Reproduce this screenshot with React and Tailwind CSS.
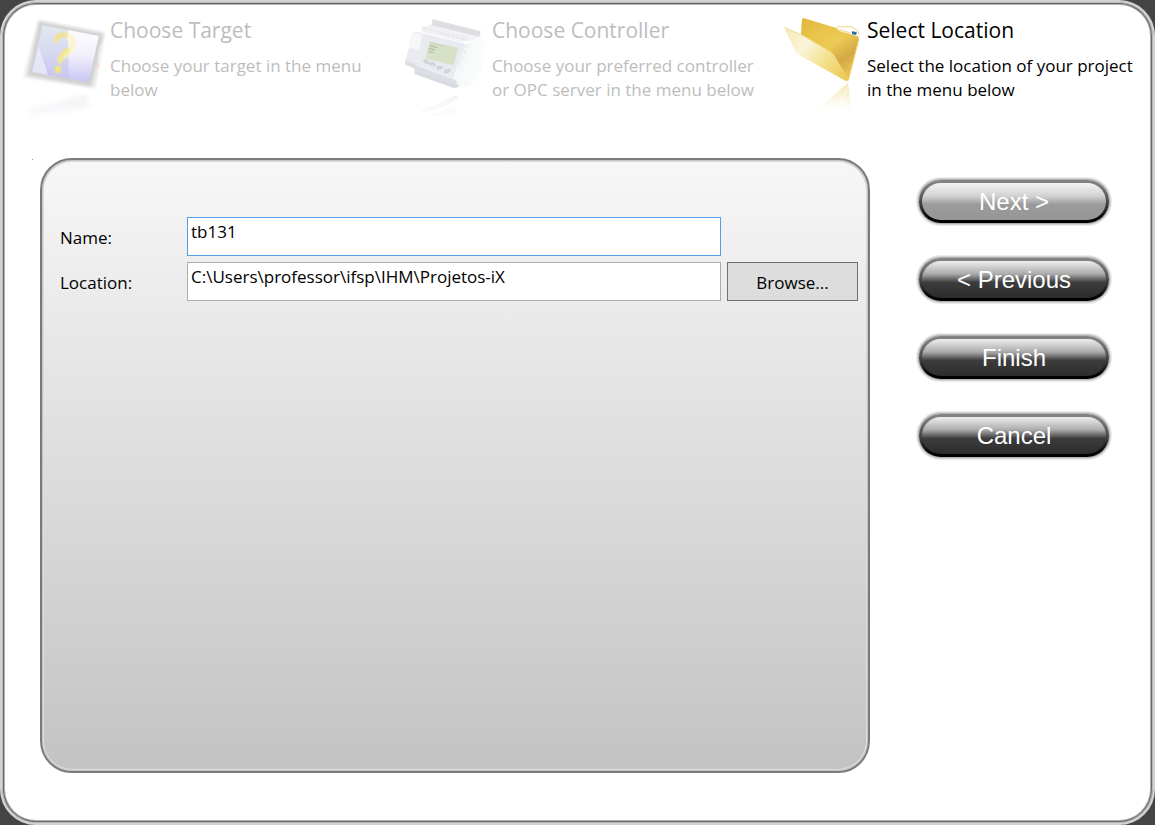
import React from "react";

const FONT = "font-['Open_Sans','Noto_Sans',sans-serif]";

function TargetIcon() {
  return (
    <svg viewBox="6 -12 264 336" className="h-[112px] w-[88px]" aria-hidden="true">
      <defs>
        <linearGradient id="screen" x1="0.3" y1="0" x2="0.2" y2="1">
          <stop offset="0" stopColor="#e3e9f0" />
          <stop offset="0.5" stopColor="#d6d8f1" />
          <stop offset="1" stopColor="#c3c2f0" />
        </linearGradient>
        <linearGradient id="screenRight" x1="0.3" y1="0" x2="0.3" y2="1">
          <stop offset="0" stopColor="#fcfcff" />
          <stop offset="0.45" stopColor="#f3f2fc" />
          <stop offset="1" stopColor="#cac6f5" />
        </linearGradient>
        <linearGradient id="targetFade" x1="0" y1="0" x2="0" y2="1">
          <stop offset="0" stopColor="#f3f3f6" />
          <stop offset="1" stopColor="#fafafc" />
        </linearGradient>
        <filter id="soft" x="-20%" y="-20%" width="140%" height="140%">
          <feGaussianBlur stdDeviation="2.5" />
        </filter>
        <filter id="softer" x="-20%" y="-20%" width="140%" height="140%">
          <feGaussianBlur stdDeviation="6" />
        </filter>
      </defs>
      <path d="M58 34 250 70 222 230 16 198Z" fill="#ebebeb" stroke="#ebebeb" strokeWidth="10" strokeLinejoin="round" filter="url(#soft)" />
      <path d="M60 38 246 74 212 226 26 194Z" fill="#d2d2d2" stroke="#d2d2d2" strokeWidth="6" strokeLinejoin="round" filter="url(#soft)" />
      <path d="M68 46 236 78 206 216 34 186Z" fill="url(#screen)" />
      <path d="M144 60 236 78 206 216 146 206Z" fill="url(#screenRight)" />
      <path d="M56 110 84 194 36 186Z" fill="#eeeefa" opacity="0.75" />
      <g fill="none" filter="url(#soft)" strokeLinecap="round">
        <path d="M140 76C154 82 164 94 158 110C154 122 140 128 134 138" stroke="#fbf5cc" strokeWidth="15" />
        <path d="M108 90C114 76 124 72 136 75" stroke="#f1e195" strokeWidth="15" />
        <path d="M142 122C130 130 122 140 120 153" stroke="#f5e88e" strokeWidth="15" />
      </g>
      <path d="M108 169 122 170 119 188 106 186Z" fill="#f5e57c" stroke="#f5e57c" strokeWidth="4" filter="url(#soft)" />
      <path d="M236 150 244 108" stroke="#f6f6f6" strokeWidth="5" filter="url(#soft)" />
      <circle cx="233" cy="166" r="5" fill="#f4cccc" filter="url(#soft)" />
      <path d="M26 298 196 252 214 284 170 302 34 318Z" fill="url(#targetFade)" filter="url(#softer)" />
    </svg>
  );
}

function ControllerIcon() {
  return (
    <svg viewBox="12 -12 264 336" className="h-[112px] w-[88px]" aria-hidden="true">
      <defs>
        <linearGradient id="side" x1="0" y1="0" x2="1" y2="0.3">
          <stop offset="0" stopColor="#f4f7f7" />
          <stop offset="1" stopColor="#fbfdfd" />
        </linearGradient>
        <linearGradient id="controllerFade" x1="0" y1="0" x2="0" y2="1">
          <stop offset="0" stopColor="#f3f3f5" />
          <stop offset="1" stopColor="#ffffff" />
        </linearGradient>
        <filter id="edge" x="-10%" y="-10%" width="120%" height="120%">
          <feGaussianBlur stdDeviation="2" />
        </filter>
      </defs>
      <g filter="url(#edge)">
        <path d="M210 86 246 70 258 100 244 190 214 226 178 236 160 210Z" fill="url(#side)" />
        <path d="M98 28 242 64 238 80 210 90 180 96 66 66 66 50 94 46Z" fill="#f3f3f5" />
        <path d="M98 28 242 64 238 80 94 46Z" fill="#dcdee1" />
        <path d="M66 50 92 46 210 80 204 94 64 62Z" fill="#eff0f2" />
        <path d="M66 52 206 90" stroke="#e3e5e7" strokeWidth="3" strokeDasharray="18 5" />
        <path d="M122 72 200 92" stroke="#e3e5e7" strokeWidth="3" strokeDasharray="10 6" />
        <path d="M44 64 198 102 158 206 16 152 36 82Z" fill="#e9ebf0" />
        <path d="M36 66 66 74 58 122 26 112Z" fill="#f6f7f7" />
        <path d="M198 102 218 92 172 218 158 206Z" fill="#f6f7f8" />
        <path d="M204 104 176 170" stroke="#e6e8ea" strokeWidth="4" strokeDasharray="12 6" />
        <path d="M90 94 174 114 160 166 77 145Z" fill="#d6e1c6" stroke="#dfe4da" strokeWidth="2" />
        <path d="M91 99 136 110" stroke="#c5cfb8" strokeWidth="3" strokeDasharray="4 2" />
        <path d="M88 107 112 113M86 116 104 120M85 125 100 128" stroke="#b4beac" strokeWidth="4" />
        <path d="M16 150 44 160 48 166 166 210 172 216 164 222 44 180 40 174 16 164Z" fill="#dcdee4" />
        <path d="M44 180 160 220 176 222 174 232 160 234 44 192Z" fill="#d8dbe1" />
        <g fill="#dcdde2" stroke="#c9cbd0" strokeWidth="3">
          <ellipse cx="79" cy="155" rx="8" ry="4" transform="rotate(18 79 155)" />
          <ellipse cx="98" cy="163" rx="8" ry="4" transform="rotate(18 98 163)" />
          <ellipse cx="119" cy="173" rx="8" ry="4" transform="rotate(-10 119 173)" />
          <ellipse cx="142" cy="183" rx="9" ry="4" transform="rotate(-20 142 183)" />
        </g>
      </g>
      <path d="M48 314 170 256 176 262 158 276 110 300 74 316Z" fill="url(#controllerFade)" filter="url(#edge)" />
      <path d="M62 306 172 256" stroke="#f1f1f3" strokeWidth="2" filter="url(#edge)" />
      <path d="M92 318 164 284 172 300 168 318Z" fill="#fbfbfb" filter="url(#edge)" />
    </svg>
  );
}

function FolderIcon() {
  return (
    <svg viewBox="-3 -12 264 336" className="h-[112px] w-[88px]" aria-hidden="true">
      <defs>
        <linearGradient id="folderBack" x1="0" y1="0" x2="0.6" y2="1">
          <stop offset="0" stopColor="#e0b63e" />
          <stop offset="0.3" stopColor="#e9c34a" />
          <stop offset="0.55" stopColor="#edca55" />
          <stop offset="0.8" stopColor="#d3a945" />
          <stop offset="1" stopColor="#e6c250" />
        </linearGradient>
        <linearGradient id="folderFront" x1="0" y1="0.2" x2="1" y2="0.8">
          <stop offset="0" stopColor="#f7ecb8" />
          <stop offset="0.3" stopColor="#fbf4da" />
          <stop offset="0.6" stopColor="#f5e498" />
          <stop offset="1" stopColor="#edcb58" />
        </linearGradient>
        <linearGradient id="folderFade" x1="0" y1="0" x2="0" y2="1">
          <stop offset="0" stopColor="#f3dd94" stopOpacity="0.75" />
          <stop offset="0.5" stopColor="#f8ecc4" stopOpacity="0.55" />
          <stop offset="1" stopColor="#fdf9ea" stopOpacity="0" />
        </linearGradient>
        <filter id="folderEdge" x="-10%" y="-10%" width="120%" height="120%">
          <feGaussianBlur stdDeviation="1" />
        </filter>
      </defs>
      <g filter="url(#folderEdge)">
        <path d="M66 28 70 24 170 54 176 60 234 78 237 86 206 210 198 212 120 150 62 84Z" fill="url(#folderBack)" />
        <path d="M170 53 176 50 182 53 206 50 234 62 237 70 232 78 180 64Z" fill="#fffdf6" />
        <path d="M170 53C178 46 180 53 188 50L214 50 234 62 237 74M178 60 212 69" fill="none" stroke="#e8cb70" strokeWidth="2.5" />
        <path d="M216 64 230 66 229 75 216 73Z" fill="#2c6b9e" />
        <path d="M12 52 64 74 92 90 150 124 162 136 206 210 196 212 48 130Z" fill="url(#folderFront)" />
        <path d="M12 52 64 74 92 90 150 124 162 136 206 210" fill="none" stroke="#ecd588" strokeWidth="2" />
        <path d="M236 90 204 212" stroke="#f0cf62" strokeWidth="3" />
      </g>
      <path d="M204 218 104 304 172 304Z" fill="url(#folderFade)" filter="url(#folderEdge)" />
      <path d="M204 218 176 306 216 306Z" fill="url(#folderFade)" filter="url(#folderEdge)" />
    </svg>
  );
}

function Step({ icon, title, text, active, width }) {
  return (
    <li className="flex min-w-0 items-start">
      <div className="w-[88px] shrink-0">{icon}</div>
      <div className={`${width} ${active ? "text-black" : "text-[#bdbdbd]"}`}>
        <h2 className="pt-2 text-[21px] leading-8">{title}</h2>
        <p className="pt-2 text-[17px] leading-6">{text}</p>
      </div>
    </li>
  );
}

function PillButton({ children, disabled }) {
  const face = disabled
    ? "bg-[linear-gradient(to_bottom,#f4f4f4,#d2d2d2_35%,#9b9b9b_58%,#969696)]"
    : "bg-[linear-gradient(to_bottom,#efefef,#ababab_35%,#3c3c3c_58%,#2c2c2c)]";
  return (
    <button
      type="button"
      disabled={disabled}
      className="h-[43px] w-full rounded-full bg-[linear-gradient(to_bottom,#858585,#6e6e6e_25%,#303030_65%,#000000_90%)] p-[3px] shadow-[0_0_0_1px_#b0b0b0,0_0_0_2px_#d4d4d4,0_0_0_3px_#ececec]"
    >
      <span
        className={`flex h-full items-center justify-center rounded-full font-['Liberation_Sans',sans-serif] text-2xl leading-none text-white ${face}`}
      >
        {children}
      </span>
    </button>
  );
}

export default function App() {
  return (
    <div className={`flex min-h-screen bg-[#444444] text-black ${FONT}`}>
      <main className="flex flex-1 flex-col rounded-[36px] border-2 border-[#d2d2d2] bg-white pt-1 pr-2 pb-[50px] pl-5 shadow-[inset_0_0_0_1px_#b8b8b8,inset_0_0_0_2px_#686868,inset_0_0_0_3px_#b0b0b0]">
        <ol className="grid grid-cols-[382fr_375fr_366fr]">
          <Step
            icon={<TargetIcon />}
            title="Choose Target"
            text="Choose your target in the menu below"
            width="w-[270px]"
          />
          <Step
            icon={<ControllerIcon />}
            title="Choose Controller"
            text="Choose your preferred controller or OPC server in the menu below"
            width="w-[275px]"
          />
          <Step
            icon={<FolderIcon />}
            title="Select Location"
            text="Select the location of your project in the menu below"
            width="w-[276px]"
            active
          />
        </ol>

        <div className="mt-10 flex flex-1 gap-[49px] pr-9 pl-[10px]">
          <div className="flex flex-1">
            <span className="mt-px mr-[7px] size-px bg-[#999999]" aria-hidden="true" />
            <form
              className="flex-1 rounded-[32px] border-2 border-[#7a7a7a] bg-[linear-gradient(to_bottom,#f7f7f7,#c3c3c3)] pt-[57px] pr-[10px] pl-[18px] shadow-[inset_0_0_0_1px_#c4c4c4,inset_0_0_0_2px_#dcdcdc]"
              onSubmit={(e) => e.preventDefault()}
            >
              <div className="grid grid-cols-[121px_1fr_131px] gap-x-[6px] gap-y-[6px] text-[17px]">
                <label htmlFor="name" className="self-center pt-[3px] leading-6">
                  Name:
                </label>
                <input
                  id="name"
                  type="text"
                  defaultValue="tb131"
                  className="h-[39px] w-full min-w-0 border border-[#569de5] bg-white px-[3px] pb-[10px] outline-none"
                />
                <span />
                <label htmlFor="location" className="self-center pt-[3px] leading-6">
                  Location:
                </label>
                <input
                  id="location"
                  type="text"
                  defaultValue="C:\Users\professor\ifsp\IHM\Projetos-iX"
                  className="h-[39px] w-full min-w-0 border border-[#abadb3] bg-white px-[3px] pb-[10px] outline-none"
                />
                <button type="button" className="h-[39px] border border-[#707070] bg-[#dddddd] pt-[3px]">
                  Browse...
                </button>
              </div>
            </form>
          </div>

          <nav className="flex w-[190px] shrink-0 flex-col gap-[35px] pt-[22px]" aria-label="Wizard">
            <PillButton disabled>Next &gt;</PillButton>
            <PillButton>&lt; Previous</PillButton>
            <PillButton>Finish</PillButton>
            <PillButton>Cancel</PillButton>
          </nav>
        </div>
      </main>
    </div>
  );
}
